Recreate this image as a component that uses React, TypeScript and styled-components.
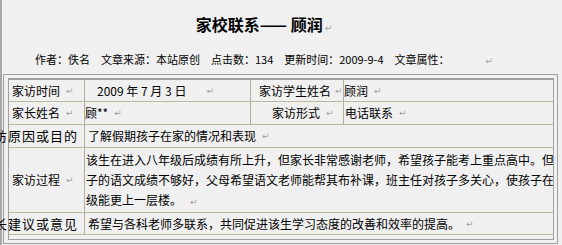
import React from "react";
import styled, { createGlobalStyle } from "styled-components";

const Global = createGlobalStyle`
  html, body { margin: 0; padding: 0; background: #f0f0f0; }
  body {
    font-family: "Noto Sans CJK SC", "Noto Sans", sans-serif;
    font-size: 12px;
    color: #000;
    overflow: hidden;
  }
`;

const Page = styled.div`
  width: 562px;
  height: 245px;
  box-sizing: border-box;
  border-left: 2px solid #a8a8a8;
  display: flex;
  flex-direction: column;
`;

const Title = styled.h1`
  margin: 14px 0 0;
  padding-right: 36px;
  height: 20px;
  line-height: 20px;
  text-align: center;
  font-size: 16px;
  font-weight: bold;
  white-space: nowrap;
`;

const Meta = styled.div`
  margin-top: 17px;
  padding-right: 36px;
  height: 16px;
  line-height: 16px;
  text-align: center;
  font-size: 11px;
  white-space: nowrap;
`;

const Mark = styled.span<{ $gap?: number }>`
  color: #a0a0a0;
  font-family: "DejaVu Sans", sans-serif;
  font-size: 9px;
  font-weight: normal;
  letter-spacing: 0;
  margin-left: ${(p) => p.$gap ?? 4}px;
`;

const Frame = styled.div`
  margin: 7px 0 0 1px;
  width: 555px;
  height: 170px;
  box-sizing: border-box;
  border: 1px solid #a0a0a0;
  padding: 3px 3px 3px 4px;
`;

const Table = styled.div`
  height: 100%;
  box-sizing: border-box;
  border-left: 1px solid #a0a0a0;
  border-right: 1px solid #a0a0a0;
  border-top: 2px solid #a0a0a0;
  border-bottom: 1px solid #a0a0a0;
  display: flex;
  flex-direction: column;
`;

const Row = styled.div<{ $cols: string; $h: number }>`
  display: grid;
  grid-template-columns: ${(p) => p.$cols};
  height: ${(p) => p.$h}px;
  box-sizing: border-box;
  border-bottom: 1px solid #bdb79e;
`;

const Cell = styled.div<{ $pl?: number; $pr?: number; $end?: boolean; $sep?: boolean; $clip?: boolean }>`
  display: flex;
  align-items: center;
  justify-content: ${(p) => (p.$end ? "flex-end" : "flex-start")};
  padding-left: ${(p) => p.$pl ?? 0}px;
  padding-right: ${(p) => p.$pr ?? 0}px;
  white-space: nowrap;
  min-width: 0;
  line-height: 16px;
  border-left: ${(p) => (p.$sep ? "1px solid #b3ae98" : "none")};
  overflow: ${(p) => (p.$clip ? "hidden" : "visible")};
`;

const WideLabel = styled(Cell)`
  font-size: 13px;
  letter-spacing: 1px;
`;

const Lines = styled.div`
  display: flex;
  flex-direction: column;
  padding: 2px 0 0 1px;
  border-left: 1px solid #b3ae98;
  overflow: hidden;
  min-width: 0;
`;

const Line = styled.div`
  height: 20px;
  line-height: 20px;
  white-space: nowrap;
`;

const FOUR = "75px 166px 93px 1fr";
const TWO = "75px 1fr";

export default function App() {
  return (
    <>
      <Global />
      <Page>
        <Title>
          家校联系—— 顾润<Mark $gap={2}>↵</Mark>
        </Title>
        <Meta>
          作者：佚名　文章来源：本站原创　点击数：134　更新时间：2009-9-4　文章属性：<Mark $gap={36}>↵</Mark>
        </Meta>
        <Frame>
          <Table>
            <Row $cols={FOUR} $h={22}>
              <Cell $pl={3}>
                家访时间<Mark $gap={6}>↵</Mark>
              </Cell>
              <Cell $sep $pl={12}>
                2009 年 7 月 3 日<Mark $gap={20}>↵</Mark>
              </Cell>
              <Cell $sep $pl={8} $clip>
                家访学生姓名<Mark $gap={4}>↵</Mark>
              </Cell>
              <Cell $sep>
                顾润<Mark $gap={6}>↵</Mark>
              </Cell>
            </Row>
            <Row $cols={FOUR} $h={23}>
              <Cell $pl={3}>
                家长姓名<Mark $gap={6}>↵</Mark>
              </Cell>
              <Cell $sep>
                顾**<Mark $gap={6}>↵</Mark>
              </Cell>
              <Cell $sep $pl={21} $clip>
                家访形式<Mark $gap={6}>↵</Mark>
              </Cell>
              <Cell $sep $pl={1}>
                电话联系<Mark $gap={6}>↵</Mark>
              </Cell>
            </Row>
            <Row $cols={TWO} $h={23}>
              <WideLabel $end $pr={6}>家访原因或目的</WideLabel>
              <Cell $sep $pl={3}>
                了解假期孩子在家的情况和表现<Mark $gap={6}>↵</Mark>
              </Cell>
            </Row>
            <Row $cols={TWO} $h={65}>
              <Cell $pl={3}>
                家访过程<Mark $gap={6}>↵</Mark>
              </Cell>
              <Lines>
                <Line>该生在进入八年级后成绩有所上升，但家长非常感谢老师，希望孩子能考上重点高中。但孩</Line>
                <Line>子的语文成绩不够好，父母希望语文老师能帮其布补课，班主任对孩子多关心，使孩子在九年</Line>
                <Line>
                  级能更上一层楼。<Mark $gap={8}>↵</Mark>
                </Line>
              </Lines>
            </Row>
            <Row $cols={TWO} $h={22}>
              <WideLabel $end $pr={6}>家长建议或意见</WideLabel>
              <Cell $sep $pl={3}>
                希望与各科老师多联系，共同促进该生学习态度的改善和效率的提高。<Mark $gap={6}>↵</Mark>
              </Cell>
            </Row>
          </Table>
        </Frame>
      </Page>
    </>
  );
}
